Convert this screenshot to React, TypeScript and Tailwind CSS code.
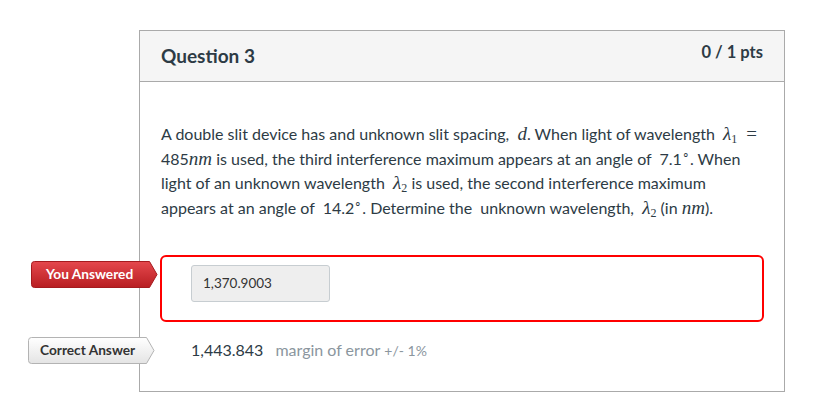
import React from "react";

const M = ({ children }: { children: React.ReactNode }) => (
  <span className="[font-family:'Liberation_Serif','DejaVu_Serif',serif] italic text-[19px] leading-[0]">{children}</span>
);

function Badge({ red, label }: { red?: boolean; label: string }) {
  return (
    <div className="relative w-[127px] h-[27px]">
      <svg width="127" height="27" viewBox="0 0 127 27" className="absolute inset-0">
        <defs>
          <linearGradient id={red ? "gr" : "gg"} x1="0" y1="0" x2="0" y2="1">
            {red ? (
              <>
                <stop offset="0" stopColor="#e5484d" />
                <stop offset="1" stopColor="#b81e22" />
              </>
            ) : (
              <>
                <stop offset="0" stopColor="#ffffff" />
                <stop offset="1" stopColor="#e4e4e4" />
              </>
            )}
          </linearGradient>
        </defs>
        <path
          d="M3.5 0.5 H118.5 L126 13.5 L118.5 26.5 H3.5 Q0.5 26.5 0.5 23.5 V3.5 Q0.5 0.5 3.5 0.5 Z"
          fill={`url(#${red ? "gr" : "gg"})`}
          stroke={red ? "#a51b1f" : "#b3b3b3"}
          strokeWidth="1"
        />
      </svg>
      <div
        className={`relative flex h-full items-center text-[13.7px] font-bold ${
          red ? "text-white pl-[15px]" : "text-[#333] pl-[12px]"
        }`}
      >
        {label}
      </div>
    </div>
  );
}

export default function App() {
  return (
    <div className="min-h-[404px] bg-white [font-family:Lato,'Liberation_Sans',sans-serif] text-[#2d3b45]">
      <div className="h-[30px]" />
      <div className="ml-[139px] w-[646px] h-[362px] border border-[#aaaaaa]">
        <div className="flex h-[51px] justify-between border-b border-[#aaaaaa] bg-[#f5f5f5] pl-[21px] pr-[21px]">
          <div className="pt-[13px] text-[19px] font-bold leading-[24px]">Question 3</div>
          <div className="pt-[11px] text-[16.5px] font-bold leading-[20px] text-[#2d3b45]">0 / 1 pts</div>
        </div>
        <div className="pl-[21px] pr-[20px] pt-[40px] text-[16px] leading-[24.7px]">
          A double slit device has and unknown slit spacing, &nbsp;<M>d</M>. When light of wavelength &nbsp;
          <M>
            λ<sub className="not-italic text-[12px]">1</sub>
          </M>{" "}
          <span className="[font-family:'Liberation_Serif',serif] text-[19px] leading-[0]">&nbsp;=</span>
          <br />
          485<M>nm</M> is used, the third interference maximum appears at an angle of &nbsp;7.1
          <sup className="text-[12px]">∘</sup>. When
          <br />
          light of an unknown wavelength &nbsp;
          <M>
            λ<sub className="not-italic text-[12px]">2</sub>
          </M>{" "}
          is used, the second interference maximum
          <br />
          appears at an angle of &nbsp;14.2<sup className="text-[12px]">∘</sup>. Determine the &nbsp;unknown wavelength,
          &nbsp;
          <M>
            λ<sub className="not-italic text-[12px]">2</sub>
          </M>{" "}
          (in <M>nm</M>).
        </div>
        <div className="relative ml-[20px] mr-[20px] mt-[34px] h-[67px] rounded-[6px] border-2 border-[#ff0000] pl-[29px] pt-[8px]">
          <div className="absolute left-[-131px] top-[4px]">
            <Badge red label="You Answered" />
          </div>
          <div className="flex h-[37px] w-[139px] items-center rounded-[3px] border border-[#c7cdd1] bg-[#eeeeee] pl-[11px] text-[13.5px] text-[#333]">
            1,370.9003
          </div>
        </div>
        <div className="relative ml-[20px] mt-[15px] flex h-[27px] items-center pl-[31px] text-[16px]">
          <div className="absolute left-[-132px] top-0">
            <Badge label="Correct Answer" />
          </div>
          <span className="text-[#2d3b45]">1,443.843</span>
          <span className="ml-[12px] text-[#8b969e]">margin of error</span>
          <span className="ml-[4px] text-[14px] text-[#8b969e]">+/- 1%</span>
        </div>
      </div>
    </div>
  );
}
